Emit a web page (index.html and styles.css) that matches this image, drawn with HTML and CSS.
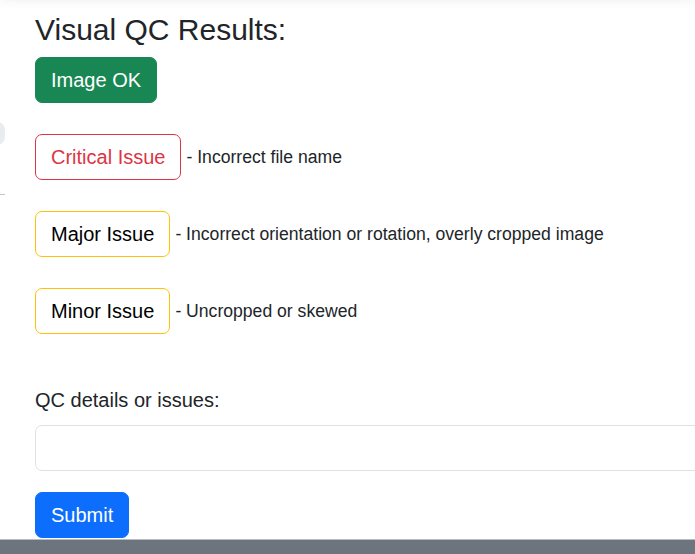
FILE: index.html
```html
<!DOCTYPE html>
<html lang="en">
<head>
<meta charset="utf-8">
<title>Visual QC Results</title>
<link rel="stylesheet" href="styles.css">
</head>
<body>
<div class="top-shadow"></div>
<div class="side-pill"></div>
<div class="side-line"></div>
<main class="page">
  <h2 class="title">Visual QC Results:</h2>
  <button class="btn btn-ok" type="button">Image OK</button>
  <div class="issue-row">
    <button class="btn btn-critical" type="button">Critical Issue</button>
    <span class="issue-desc">- Incorrect file name</span>
  </div>
  <div class="issue-row">
    <button class="btn btn-warn" type="button">Major Issue</button>
    <span class="issue-desc">- Incorrect orientation or rotation, overly cropped image</span>
  </div>
  <div class="issue-row">
    <button class="btn btn-warn" type="button">Minor Issue</button>
    <span class="issue-desc">- Uncropped or skewed</span>
  </div>
  <form class="qc-form">
    <label class="qc-label" for="qc">QC details or issues:</label>
    <input class="qc-input" id="qc" type="text">
    <button class="btn btn-submit" type="button">Submit</button>
  </form>
</main>
<footer class="footer-bar"></footer>
</body>
</html>
```

FILE: styles.css
```css
html, body {
  margin: 0;
  padding: 0;
  background: #fff;
  overflow: hidden;
}
body {
  font-family: "Liberation Sans", Arial, sans-serif;
  color: #212529;
  height: 554px;
}
.top-shadow {
  position: fixed;
  left: 0;
  right: 0;
  top: -20px;
  height: 20px;
  box-shadow: 0 0 12px rgba(0, 0, 0, 0.07);
  background: #fff;
}
.side-pill {
  position: absolute;
  left: -15px;
  top: 122px;
  width: 20px;
  height: 23px;
  border-radius: 8px;
  background: #e9ecef;
}
.side-line {
  position: absolute;
  left: 0;
  top: 194px;
  width: 5px;
  height: 1px;
  background: #c8c8c8;
}
.page {
  padding: 12px 0 0 35px;
  display: flex;
  flex-direction: column;
  align-items: flex-start;
}
.title {
  margin: 0;
  font-size: 30px;
  line-height: 36px;
  font-weight: 400;
}
.btn {
  font-family: inherit;
  font-size: 20px;
  line-height: 28px;
  padding: 8px 15px;
  border: 1px solid transparent;
  border-radius: 7px;
  background: #fff;
  cursor: pointer;
}
.btn-ok {
  margin-top: 9px;
  background: #198754;
  border-color: #198754;
  color: #fff;
}
.issue-row {
  margin-top: 31px;
  display: flex;
  align-items: center;
  gap: 5px;
}
.btn-critical {
  color: #dc3545;
  border-color: #dc3545;
}
.btn-warn {
  color: #000;
  border-color: #ffc107;
}
.issue-desc {
  font-size: 17.6px;
  color: #212529;
}
.qc-form {
  margin-top: 51px;
  align-self: stretch;
  overflow: hidden;
  display: flex;
  flex-direction: column;
  align-items: flex-start;
}
.qc-label {
  font-size: 20px;
  line-height: 30px;
}
.qc-input {
  margin-top: 10px;
  box-sizing: border-box;
  width: calc(100% + 12px);
  height: 46px;
  border: 1px solid #dee2e6;
  border-radius: 7px;
  font-size: 20px;
  padding: 8px 16px;
  font-family: inherit;
  outline: none;
}
.btn-submit {
  margin-top: 21px;
  background: #0d6efd;
  border-color: #0d6efd;
  color: #fff;
}
.footer-bar {
  position: fixed;
  left: 0;
  right: 0;
  bottom: 0;
  height: 14px;
  background: #6c757d;
  border-top: 1px solid #b9bdc1;
}
```
